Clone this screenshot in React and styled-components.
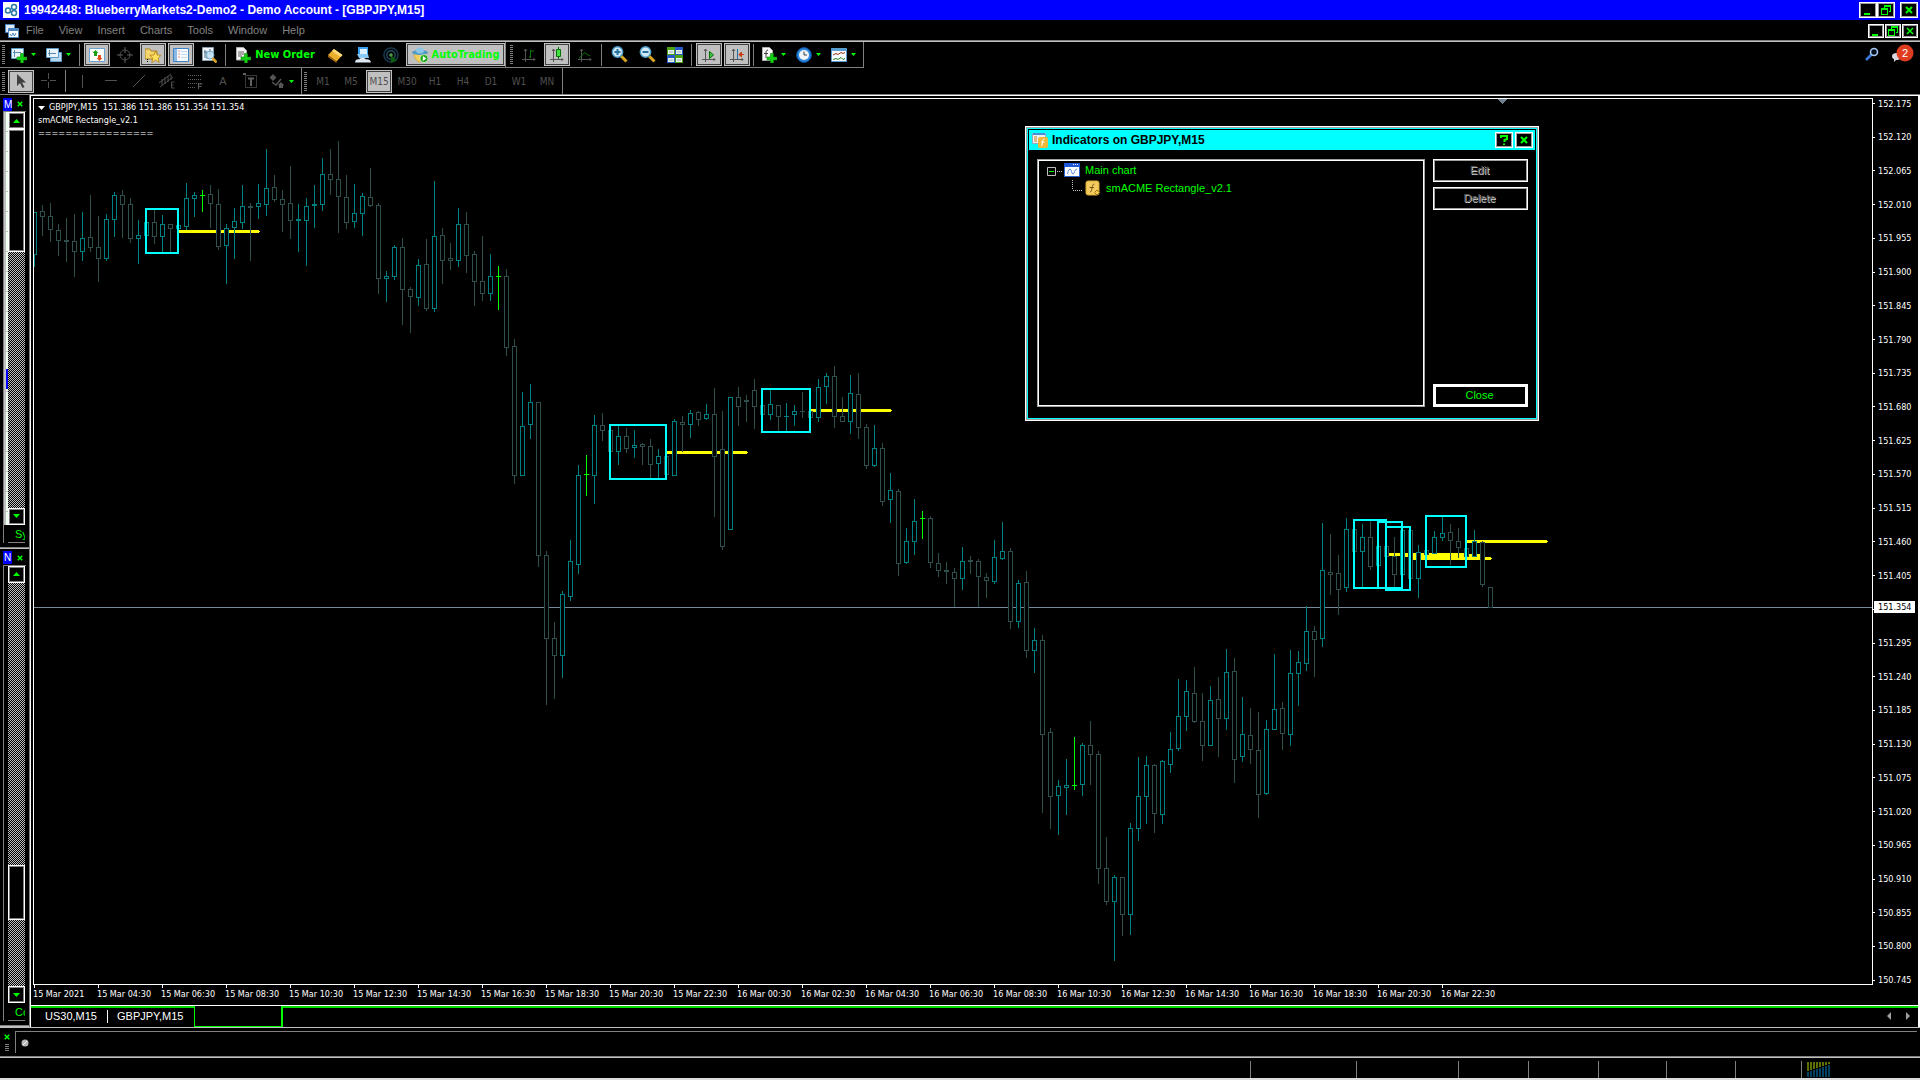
import React from 'react';
import styled, { createGlobalStyle, css } from 'styled-components';

const STEP = 8;
const ORIGIN_Y = 99;

const COLORS = { u: '#008080', d: '#2f4f4f', x: '#00ff00' };

// kind, high, body top, body bottom, low
const candles = [
  ['u', 212, 212, 255, 267], ['d', 205, 211, 217, 236], ['d', 203, 216, 230, 242], ['d', 224, 230, 241, 256],
  ['d', 218, 240, 242, 262], ['d', 214, 241, 252, 277], ['u', 212, 238, 252, 261], ['d', 195, 237, 248, 252],
  ['d', 216, 247, 259, 282], ['u', 214, 219, 259, 261], ['u', 192, 195, 220, 237], ['d', 190, 195, 205, 238],
  ['d', 198, 204, 239, 243], ['u', 220, 235, 239, 264], ['u', 222, 222, 236, 236], ['d', 209, 222, 237, 244],
  ['u', 215, 224, 237, 253], ['d', 224, 224, 229, 253], ['u', 225, 225, 229, 229], ['u', 183, 198, 227, 230],
  ['u', 192, 195, 199, 217], ['x', 190, 195, 196, 212], ['d', 185, 194, 204, 228], ['d', 189, 204, 247, 250],
  ['u', 224, 228, 246, 284], ['u', 208, 221, 228, 259], ['u', 185, 206, 223, 229], ['d', 203, 206, 208, 261],
  ['u', 184, 203, 207, 219], ['u', 149, 188, 205, 216], ['d', 175, 187, 200, 202], ['d', 190, 199, 205, 232],
  ['d', 166, 203, 221, 239], ['u', 204, 219, 221, 252], ['u', 198, 206, 221, 266], ['u', 185, 204, 206, 228],
  ['u', 158, 174, 205, 211], ['d', 149, 174, 180, 195], ['d', 141, 179, 197, 233], ['d', 175, 197, 223, 229],
  ['u', 184, 213, 222, 228], ['u', 193, 196, 214, 236], ['d', 168, 197, 206, 207], ['d', 203, 205, 279, 294],
  ['u', 271, 276, 279, 302], ['u', 245, 247, 277, 280], ['d', 238, 247, 290, 325], ['d', 287, 289, 297, 333],
  ['u', 259, 265, 298, 306], ['d', 239, 264, 309, 311], ['u', 181, 236, 309, 312], ['d', 228, 235, 261, 284],
  ['d', 243, 258, 261, 270], ['u', 208, 224, 261, 267], ['d', 212, 224, 256, 273], ['d', 251, 254, 282, 306],
  ['d', 236, 281, 294, 301], ['u', 254, 276, 294, 301], ['x', 266, 276, 277, 310], ['d', 269, 276, 348, 356],
  ['d', 339, 346, 476, 484], ['u', 392, 426, 476, 476], ['u', 384, 402, 425, 439], ['d', 402, 402, 556, 567],
  ['d', 551, 555, 639, 705], ['d', 622, 638, 656, 699], ['u', 591, 594, 656, 678], ['u', 540, 561, 597, 601],
  ['u', 465, 475, 565, 574], ['x', 455, 474, 475, 496], ['u', 415, 425, 476, 504], ['d', 413, 425, 431, 441],
  ['d', 430, 430, 452, 452], ['u', 426, 436, 452, 465], ['d', 428, 436, 449, 453], ['u', 430, 445, 448, 458],
  ['d', 443, 444, 447, 465], ['d', 439, 446, 465, 478], ['u', 449, 456, 464, 478], ['d', 456, 456, 475, 475],
  ['u', 419, 421, 476, 476], ['d', 416, 422, 425, 452], ['u', 410, 413, 425, 438], ['d', 411, 412, 420, 426],
  ['u', 404, 414, 419, 420], ['d', 388, 414, 457, 517], ['d', 411, 449, 547, 550], ['u', 397, 397, 530, 530],
  ['d', 387, 397, 407, 426], ['d', 395, 400, 402, 422], ['d', 379, 390, 407, 429], ['d', 405, 405, 415, 415],
  ['u', 389, 404, 415, 420], ['d', 405, 405, 417, 432], ['u', 403, 416, 417, 432], ['u', 405, 411, 415, 426],
  ['d', 392, 411, 412, 418], ['d', 411, 411, 418, 418], ['u', 379, 387, 418, 422], ['u', 373, 376, 387, 404],
  ['d', 366, 376, 417, 428], ['d', 397, 416, 422, 422], ['u', 375, 393, 422, 434], ['d', 373, 394, 428, 439],
  ['d', 424, 427, 466, 469], ['u', 425, 448, 466, 467], ['d', 443, 448, 502, 506], ['u', 473, 490, 500, 523],
  ['d', 489, 491, 564, 576], ['u', 528, 541, 563, 564], ['u', 499, 521, 542, 555], ['x', 511, 518, 519, 539],
  ['d', 516, 518, 563, 568], ['d', 553, 563, 571, 577], ['d', 562, 570, 572, 584], ['d', 568, 572, 579, 607],
  ['u', 547, 561, 579, 590], ['d', 556, 560, 562, 574], ['d', 559, 561, 577, 607], ['d', 573, 577, 581, 598],
  ['u', 540, 557, 582, 584], ['u', 522, 551, 559, 560], ['d', 548, 551, 622, 629], ['u', 580, 583, 622, 628],
  ['d', 571, 582, 651, 658], ['u', 628, 640, 651, 673], ['d', 635, 640, 735, 813], ['d', 728, 732, 797, 829],
  ['u', 780, 786, 796, 835], ['u', 759, 785, 788, 815], ['x', 737, 785, 786, 790], ['u', 743, 745, 785, 796],
  ['d', 721, 745, 755, 785], ['d', 751, 754, 869, 884], ['d', 837, 868, 902, 905], ['u', 875, 877, 902, 961],
  ['d', 877, 877, 915, 936], ['u', 823, 828, 915, 935], ['u', 757, 796, 829, 841], ['u', 756, 765, 797, 824],
  ['d', 764, 765, 814, 833], ['u', 760, 761, 815, 824], ['u', 732, 749, 765, 773], ['u', 679, 716, 749, 751],
  ['u', 680, 691, 717, 731], ['d', 667, 693, 722, 723], ['d', 693, 721, 746, 761], ['u', 686, 700, 746, 746],
  ['d', 677, 699, 719, 757], ['u', 649, 672, 719, 730], ['d', 658, 671, 760, 783], ['u', 697, 734, 757, 762],
  ['d', 708, 735, 750, 764], ['d', 712, 750, 795, 818], ['u', 720, 729, 794, 795], ['u', 654, 709, 730, 730],
  ['d', 702, 708, 734, 750], ['u', 650, 673, 735, 746], ['u', 651, 662, 674, 706], ['u', 606, 631, 664, 671],
  ['d', 626, 631, 640, 677], ['u', 523, 570, 639, 647], ['d', 534, 572, 575, 595], ['d', 555, 573, 590, 615],
  ['u', 518, 529, 588, 592], ['d', 529, 529, 552, 552], ['u', 524, 537, 552, 588], ['d', 520, 537, 567, 570],
  ['u', 546, 546, 566, 566], ['d', 546, 546, 557, 557], ['d', 537, 556, 575, 588], ['u', 530, 530, 575, 575],
  ['d', 530, 530, 579, 579], ['u', 545, 552, 579, 598], ['d', 550, 550, 555, 555], ['u', 531, 537, 554, 554],
  ['u', 516, 533, 538, 541], ['d', 524, 532, 541, 565], ['d', 528, 541, 548, 558], ['d', 548, 548, 557, 557],
  ['u', 530, 541, 557, 557], ['d', 541, 542, 585, 587], ['d', 587, 587, 608, 608],
];

// x, y, width, height of the consolidation boxes
const zones = [
  [111, 208, 34, 46],
  [575, 424, 58, 56],
  [727, 388, 50, 45],
  [1319, 519, 34, 70],
  [1343, 521, 26, 68],
  [1351, 526, 26, 65],
  [1391, 515, 42, 53],
];

const levels = [[145, 230], [633, 451], [777, 409], [1353, 553], [1369, 554], [1377, 557], [1433, 540]];

const prices = Array.from({ length: 27 }, (_, i) => (152.175 - i * 0.055).toFixed(3));
// this label sits behind the current price
prices[15] = '';

const times = ['15 Mar 2021'];
for (let h = 4; h < 24; h += 2) times.push(`15 Mar ${String(h).padStart(2, '0')}:30`);
for (let h = 0; h < 24; h += 2) times.push(`16 Mar ${String(h).padStart(2, '0')}:30`);

const GlobalStyle = createGlobalStyle`
  * {
    box-sizing: border-box;
  }

  html, body, #root {
    height: 100%;
    margin: 0;
  }

  body {
    background: #000;
    overflow: hidden;
    font-family: 'Liberation Sans', Arial, sans-serif;
    font-size: 11px;
  }

  button {
    font: inherit;
    color: inherit;
    background: none;
    border: 0;
    padding: 0;
  }

  svg {
    display: block;
    flex: none;
  }
`;

const small = css`
  font-family: 'DejaVu Sans Condensed', 'DejaVu Sans', sans-serif;
  font-size: 9px;
`;

const Page = styled.div`
  display: flex;
  flex-direction: column;
  height: 100vh;
  color: #fff;
  border-bottom: 2px solid #dcdcdc;
`;

const TitleBar = styled.header`
  display: flex;
  align-items: center;
  height: 20px;
  padding: 0 2px 0 3px;
  gap: 5px;
  background: #0000ff;
`;

const Title = styled.h1`
  flex: 1;
  margin: 0;
  font-size: 12px;
  font-weight: bold;
`;

const Caption = styled.div`
  display: flex;
  gap: ${(p) => p.$gap || 0}px;
`;

const CaptionButton = styled.button`
  display: flex;
  align-items: center;
  justify-content: center;
  width: ${(p) => p.$w || 18}px;
  height: ${(p) => p.$h || 16}px;
  background: #000;
  border: 1px solid #fff;
  box-shadow: inset 0 0 0 1px #a0a0a0;
`;

const MenuBar = styled.nav`
  display: flex;
  align-items: center;
  height: 22px;
  padding: 0 2px 0 5px;
  border-bottom: 1px solid #c0c0c0;
  box-shadow: inset 0 -1px #808080;
`;

const Menu = styled.ul`
  display: flex;
  flex: 1;
  list-style: none;
  margin: 0;
  padding: 0 0 2px 7px;
  gap: 15px;
  color: #808080;
`;

const Tools = styled.div`
  display: flex;
  justify-content: space-between;
  height: 26px;
`;

const ToolBar = styled.div`
  display: flex;
  align-items: center;
  height: 26px;
  padding-left: ${(p) => p.$lead || 2}px;
  border-right: 1px solid #808080;
  border-bottom: ${(p) => (p.$last ? 0 : 1)}px solid #808080;
`;

const ToolRow = styled.div`
  display: flex;
  height: 26px;
`;

const Grip = styled.i`
  width: 3px;
  height: 19px;
  margin-right: 3px;
  background: repeating-linear-gradient(#808080 0 1px, #000 1px 2px);
`;

const Separator = styled.i`
  width: 1px;
  height: 22px;
  margin: 0 4px 0 1px;
  background: #808080;
`;

const Tool = styled.button`
  display: flex;
  align-items: center;
  justify-content: center;
  gap: ${(p) => p.$gap || 4}px;
  width: ${(p) => p.$w || 26}px;
  height: 23px;
  margin-right: ${(p) => (p.$flush ? 0 : 2)}px;
  color: ${(p) => p.$color || '#505050'};
  ${(p) =>
    p.$on &&
    css`
      background: #c0c0c0;
      border: 1px solid #c0c0c0;
      box-shadow: inset 0 0 0 1px #404040;
    `}
`;

const MenuTool = styled(Tool)`
  justify-content: flex-start;
  width: 33px;
  padding-left: 3px;
`;

const Period = styled(Tool)`
  font-family: 'DejaVu Sans Condensed', 'DejaVu Sans', sans-serif;
  font-size: 10px;
`;

const BoldLabel = styled.span`
  font-family: 'DejaVu Sans Condensed', 'DejaVu Sans', sans-serif;
  font-weight: bold;
  font-size: 11px;
  color: #00ff00;
  white-space: nowrap;
`;

const Status = styled.div`
  display: flex;
  align-items: center;
  gap: 12px;
  padding: 0 6px 2px 0;
`;

const Workspace = styled.div`
  display: flex;
  flex: 1;
  min-height: 0;
  border-top: 1px solid #808080;
`;

const Sidebar = styled.aside`
  display: flex;
  flex-direction: column;
  width: 30px;
  border-right: 1px solid #808080;
`;

const Panel = styled.section`
  display: flex;
  flex-direction: column;
  flex: ${(p) => p.$grow} 0 0;
  min-height: 0;
  padding: 2px 3px 5px 3px;
  border-bottom: 1px solid #c0c0c0;
  box-shadow: inset 0 -1px #808080;
`;

const PanelHead = styled.div`
  display: flex;
  align-items: center;
  gap: 5px;
  height: 14px;
`;

const PanelName = styled.h2`
  width: 9px;
  height: 13px;
  margin: 0;
  padding-left: 1px;
  overflow: hidden;
  background: #0000ff;
  font-size: 10px;
  line-height: 13px;
  font-weight: normal;
`;

const PanelBody = styled.div`
  display: flex;
  flex: 1;
  min-height: 0;
  border-top: 1px solid #808080;
  border-left: 1px solid #808080;
`;

const ListEdge = styled.div`
  width: 4px;
  background: ${(p) =>
    p.$filled
      ? 'repeating-linear-gradient(#f0fff0 0 19px, #c0c0c0 19px 20px) 2px 0 / 2px 100% no-repeat, #c0c0c0'
      : '#000'};
  margin-bottom: 18px;
  padding: 257px 0 0 2px;
`;

const Selected = styled.i`
  display: block;
  height: 20px;
  background: #0000ff;
`;

const ScrollColumn = styled.div`
  display: flex;
  flex-direction: column;
  width: 17px;
`;

const ScrollButton = styled.button`
  display: flex;
  align-items: center;
  justify-content: center;
  height: 17px;
  border: 1px solid #fff;
  box-shadow: inset 0 0 0 1px #808080;
`;

const Track = styled.div`
  display: flex;
  flex-direction: column;
  flex: 1;
  background: repeating-conic-gradient(#c0c0c0 0 25%, #000 0 50%) 0 0 / 2px 2px;
`;

const Space = styled.i`
  flex: ${(p) => p.$grow} 0 0;
`;

const Thumb = styled.i`
  flex: ${(p) => p.$grow} 0 0;
  background: #000;
  border: 1px solid #fff;
  box-shadow: inset 0 0 0 1px #808080;
`;

const PanelTab = styled.div`
  height: 18px;
  padding-left: 7px;
  overflow: hidden;
  color: #00ff00;
  line-height: 18px;
  border-bottom: 1px solid #808080;
`;

const Mdi = styled.main`
  display: flex;
  flex-direction: column;
  flex: 1;
  min-width: 0;
  border: solid #fff;
  border-width: 1px 2px 0 1px;
`;

const Chart = styled.div`
  display: grid;
  grid-template-columns: 1fr 45px;
  grid-template-rows: 1fr 20px;
  flex: 1;
  min-height: 0;
  padding: 2px 0 0 2px;
`;

const Plot = styled.div`
  position: relative;
  min-height: 0;
  overflow: hidden;
  border: 1px solid #fff;
`;

const ChartInfo = styled.div`
  ${small}
  position: absolute;
  top: 2px;
  left: 4px;
  line-height: 13px;
  white-space: pre;
`;

const InfoHead = styled.div`
  display: flex;
  align-items: center;
  gap: 4px;
`;

const PriceAxis = styled.div`
  ${small}
  position: relative;
  display: flex;
  flex-direction: column;
  justify-content: space-between;
  margin-bottom: -1px;
`;

const Price = styled.span`
  display: flex;
  align-items: center;
  gap: 3px;
  height: 11px;
  &::before {
    content: '';
    width: 2px;
    height: 1px;
    background: #fff;
  }
`;

const CurrentPrice = styled.span`
  position: absolute;
  top: 503px;
  left: 1px;
  width: 41px;
  padding-left: 4px;
  line-height: 12px;
  color: #000;
  background: #fff;
`;

const TimeAxis = styled.div`
  ${small}
  grid-column: 1 / 3;
  display: flex;
  overflow: hidden;
`;

const Time = styled.span`
  flex: none;
  width: 64px;
  height: 20px;
  line-height: 19px;
  white-space: nowrap;
  background: linear-gradient(#fff, #fff) 1px 0 / 1px 3px no-repeat;
`;

const Tabs = styled.div`
  display: flex;
  height: 22px;
  border-top: 1px solid #fff;
`;

const Tab = styled.button`
  display: flex;
  align-items: center;
  padding: 0 ${(p) => p.$right}px 3px ${(p) => p.$left}px;
  border-top: 2px solid #00dc00;
`;

const TabDivider = styled.i`
  width: 1px;
  border-top: 2px solid #00dc00;
  background: linear-gradient(#fff, #fff) 0 2px / 1px 13px no-repeat;
`;

const ActiveTab = styled.div`
  width: 89px;
  border: solid #00ff00;
  border-width: 0 2px 1px 1px;
`;

const TabRest = styled.div`
  display: flex;
  flex: 1;
  align-items: center;
  justify-content: flex-end;
  gap: 15px;
  padding: 0 8px 3px 0;
  border-top: 2px solid #00dc00;
`;

const Terminal = styled.div`
  display: flex;
  height: 31px;
  padding: 3px 3px 2px 3px;
  border: solid #c0c0c0;
  border-width: 1px 0;
  box-shadow: inset 0 -1px #808080;
`;

const TerminalSide = styled.div`
  display: flex;
  flex-direction: column;
  align-items: center;
  gap: 4px;
  width: 12px;
  padding: 3px 4px 0 0;
`;

const TerminalGrip = styled.i`
  width: 4px;
  height: 7px;
  background: repeating-linear-gradient(#808080 0 1px, #000 1px 2px);
`;

const TerminalBody = styled.div`
  flex: 1;
  padding: 7px 5px;
  border: solid #808080;
  border-width: 1px 0 0 1px;
  margin-bottom: 2px;
`;

const StatusBar = styled.footer`
  display: flex;
  justify-content: flex-end;
  height: 20px;
  padding-top: 3px;
`;

const StatusCell = styled.div`
  width: ${(p) => p.$w}px;
  padding: 1px 0 0 5px;
  border-left: 1px solid #808080;
`;

const Dialog = styled.section`
  position: absolute;
  top: 126px;
  left: 1025px;
  display: flex;
  flex-direction: column;
  width: 514px;
  height: 295px;
  padding: 1px;
  background: #000;
  border: 1px solid #fff;
  box-shadow: inset 0 0 0 1px #a0a0a0, inset 0 0 0 2px #00ffff;
`;

const DialogHead = styled.div`
  display: flex;
  align-items: center;
  gap: 4px;
  height: 20px;
  margin: 2px 2px 0;
  padding: 0 2px 0 3px;
  background: #00ffff;
  color: #000;
`;

const DialogBody = styled.div`
  display: flex;
  flex: 1;
  gap: 8px;
  padding: 9px 9px 12px 10px;
`;

const Tree = styled.ul`
  flex: 1;
  margin: 0;
  padding: 1px 0 0 9px;
  list-style: none;
  color: #00ff00;
  border: 1px solid #a0a0a0;
  box-shadow: inset 0 0 0 1px #fff;
`;

const TreeItem = styled.li`
  display: flex;
  align-items: center;
  gap: ${(p) => p.$gap}px;
  height: 18px;
  padding-left: ${(p) => p.$indent || 0}px;
`;

const DialogActions = styled.div`
  display: flex;
  flex-direction: column;
  gap: 5px;
  width: 95px;
`;

const DialogButton = styled.button`
  height: 23px;
  padding: 0 2px 2px 0;
  border: 1px solid #fff;
  box-shadow: inset 0 0 0 ${(p) => (p.$default ? 2 : 1)}px ${(p) => (p.$default ? '#fff' : '#a0a0a0')};
  color: ${(p) => (p.disabled ? '#606060' : '#00ff00')};
  text-shadow: ${(p) => (p.disabled ? '1px 1px #d0d0d0' : 'none')};
  margin-top: ${(p) => (p.$default ? 'auto' : 0)};
`;

const Icon = ({ w = 16, h = 16, children, ...rest }) => (
  <svg width={w} height={h} viewBox={`0 0 ${w} ${h}`} fill="none" aria-hidden="true" {...rest}>
    {children}
  </svg>
);

const Arrow = () => (
  <Icon w={5} h={3}>
    <path d="M0 0h5L2.5 3z" fill="#00ff00" />
  </Icon>
);

const Cross = ({ size = 8, width = 2 }) => (
  <Icon w={size} h={size} viewBox="0 0 8 8">
    <path d="M1 1l6 6M7 1l-6 6" stroke="#00ff00" strokeWidth={width} />
  </Icon>
);

const Minimize = () => (
  <Icon w={10} h={10}>
    <path d="M1 8h6v2H1z" fill="#00ff00" />
  </Icon>
);

const Restore = () => (
  <Icon w={10} h={10} shapeRendering="crispEdges">
    <path d="M3 0h7v7H8V6h1V2H4v1H3z" fill="#00ff00" />
    <path d="M0 3h7v7H0zM1 5v4h5V5z" fill="#00ff00" fillRule="evenodd" />
  </Icon>
);

const Plus = () => (
  <path d="M9.500 6.500h3v3.500h3.500v3h-3.500v3h-3v-3H6v-3h3.500z" fill="#14d214" stroke="#078007" strokeWidth=".6" />
);

const Axes = ({ color = '#555' }) => (
  <path d="M4.500 2v13M1 12.500h13M3 4l1.500-2L6 4M12.500 11l1.500 1.500-1.500 1.500" stroke={color} />
);

const Magnifier = ({ minus }) => (
  <Icon w={17} h={17}>
    <path d="M10 10l5.500 5.500" stroke="#d9a520" strokeWidth="3" />
    <circle cx="6.500" cy="6" r="5.200" fill="#cfeaf8" stroke="#4f9cc8" strokeWidth="1.400" />
    <path d={minus ? 'M3.500 6h6' : 'M3.500 6h6M6.500 3v6'} stroke="#2b6f9c" strokeWidth="2" />
  </Icon>
);

const ICONS = {
  newChart: (
    <>
      <path d="M.5 1.500h12v10H.5z" fill="#e8f3fb" stroke="#5a9bc8" />
      <path d="M3.500 3v7M2 5.500h8" stroke="#5a88a8" />
      <Plus />
    </>
  ),
  profiles: (
    <>
      <path d="M4.500 5.500h11v9h-11z" fill="#b9d8ee" stroke="#5a9bc8" />
      <path d="M.5 1.500h12v9H.5z" fill="#e8f3fb" stroke="#5a9bc8" />
      <path d="M3.500 3v6M2 6.500h8" stroke="#5a88a8" />
    </>
  ),
  market: (
    <>
      <path d="M.5 1.500h15v13H.5z" fill="#fff" stroke="#6aa3d0" />
      <path d="M6.500 3l3 3H8v3H5V6H3.500z" fill="#18a018" />
      <path d="M10.500 14L7.500 11H9V8h3v3h1.500z" fill="#e0501c" />
    </>
  ),
  cross: (
    <>
      <circle cx="8" cy="8" r="5" stroke="#505050" />
      <path d="M8 0v6M8 10v6M0 8h6M10 8h6" stroke="#606060" />
    </>
  ),
  favorites: (
    <>
      <path d="M0 2h5l1 2h6v8H0z" fill="#f4d46c" stroke="#a8821c" />
      <path d="M2.500 12v4" stroke="#000" strokeDasharray="1 1" />
      <path d="M10.500 4l1.700 4 4 .3-3 2.700 1 4.500-3.700-2.400-3.700 2.400 1-4.500-3-2.700 4-.3z" fill="#ffe060" stroke="#b07c10" strokeWidth=".8" />
    </>
  ),
  terminal: (
    <>
      <path d="M.5 1.500h15v13H.5z" fill="#f6fafe" stroke="#3d83c4" />
      <path d="M1 2h3v12H1z" fill="#8cb8e4" />
      <path d="M5.500 4h1M5.500 7h1M5.500 10h1" stroke="#d04020" />
      <path d="M8 4.500h6M8 7.500h6M8 10.500h6" stroke="#c8dcf0" />
    </>
  ),
  tester: (
    <>
      <path d="M1.500.5h11v13h-11z" fill="#f2f6fa" stroke="#8aa0b0" />
      <path d="M4 3v8M6 5v7M3 5h3M9 2v6" stroke="#4a6a80" />
      <circle cx="9" cy="8" r="4" fill="#bfe0f2" fillOpacity=".8" stroke="#6fa6c8" />
      <path d="M11.500 11l4 4.500" stroke="#d9a520" strokeWidth="2.600" />
    </>
  ),
  order: (
    <>
      <path d="M1.500.5h7l3 3v9.500h-10z" fill="#f4f4f4" stroke="#b0b0b0" />
      <path d="M3 5h6M3 7h6M3 9h4" stroke="#606060" />
      <Plus />
    </>
  ),
  book: (
    <>
      <path d="M1 8l6-6 8.500 6-6 6.500z" fill="#e8ae2c" />
      <path d="M7 2l8.500 6-2 2L5 4z" fill="#ffd978" />
      <path d="M1 8l8.500 6.500v1.500L1 10z" fill="#a86c10" />
    </>
  ),
  guide: (
    <>
      <path d="M3 0h10v8H3z" fill="#3aa0f0" />
      <path d="M5 2h7v5H5z" fill="#dff1ff" />
      <path d="M2 7h11l1 4H4z" fill="#8cc8f4" />
      <path d="M0 15.500c0-3 3-4 4-3 1-2.500 6-2.500 7 0 2-1 5 1 5 3z" fill="#dde8f2" />
    </>
  ),
  signal: (
    <>
      <circle cx="8" cy="8" r="7" stroke="#16384e" strokeWidth="1.600" />
      <circle cx="8" cy="8" r="4.200" stroke="#1f5068" strokeWidth="1.400" />
      <path d="M8 8v8l6-2.500z" fill="#0b5c0b" />
      <circle cx="8" cy="8" r="1.800" fill="#4c9c4c" />
    </>
  ),
  auto: (
    <>
      <path d="M2 6c0 5 3 9 6 9s6-4 6-9z" fill="#f2cf58" stroke="#c89a20" strokeWidth=".6" />
      <ellipse cx="8" cy="5.500" rx="8" ry="2.500" fill="#4f9cc8" />
      <ellipse cx="8" cy="3.500" rx="4" ry="3" fill="#8cc6e4" />
      <circle cx="12" cy="11.500" r="4" fill="#18a818" stroke="#fff" strokeWidth=".6" />
      <path d="M10.800 9l3.500 2.500-3.500 2.500z" fill="#fff" />
    </>
  ),
  bars: (
    <>
      <Axes />
      <path d="M9.500 3v8M8 10h2M10 4h3" stroke="#0a7a0a" />
    </>
  ),
  candle: (
    <>
      <Axes />
      <path d="M9.500 0v12" stroke="#087008" />
      <path d="M7.500 2.500h4v7h-4z" fill="#40e040" stroke="#087008" />
    </>
  ),
  line: (
    <>
      <Axes />
      <path d="M2 11c3-1 4-6 6-5s3 2 5 3" stroke="#0a7a0a" />
    </>
  ),
  tile: (
    <>
      <path d="M0 0h8v8H0zM8 8h8v8H8z" fill="#4ea014" />
      <path d="M8 0h8v8H8zM0 8h8v8H0z" fill="#2858c8" />
      <path d="M1 3h6v4H1zM9 3h6v4H9zM1 11h6v4H1zM9 11h6v4H9z" fill="#e8f2e8" />
      <path d="M2 5h4M10 5h4M2 13h4M10 13h4" stroke="#90b0c0" />
    </>
  ),
  scroll: (
    <>
      <Axes />
      <path d="M8.500 4.500l4 3.500-4 3.500z" fill="#40c040" stroke="#087008" />
    </>
  ),
  shift: (
    <>
      <Axes />
      <path d="M8.500 2v10" stroke="#2070a8" />
      <path d="M10 7.500h5M12.500 5L10 7.500l2.500 2.500z" stroke="#c83c10" fill="#c83c10" />
    </>
  ),
  indicators: (
    <>
      <path d="M1.500.5h7l3 3v10h-10z" fill="#f8f8f8" stroke="#b0b0b0" />
      <path d="M7 3c-2 0-2 2-2 3v5M3 6.500h4" stroke="#404040" />
      <Plus />
    </>
  ),
  clock: (
    <>
      <circle cx="8" cy="8" r="7.400" fill="#2a86dc" stroke="#0c4c98" />
      <circle cx="8" cy="8" r="5" fill="#eef4f8" />
      <path d="M8 4.500V8h3" stroke="#404040" />
    </>
  ),
  template: (
    <>
      <path d="M.5 1.500h15v13H.5z" fill="#f6fafc" stroke="#5a9bd0" />
      <path d="M1 2h14v2H1z" fill="#5a9bd0" />
      <path d="M2 8l3-1.500 2 1 3-2 2 1 2-1" stroke="#a03018" />
      <path d="M2 12.500l3-1 2 1 3-2 2 2 2-1" stroke="#208020" />
    </>
  ),
  cursor: <path d="M4 1v12l3-3 2.500 5 2-1L9 9.500h4z" fill="#404040" />,
  crosshair: <path d="M7.500 0v6M7.500 9v6M0 7.500h6M9 7.500h6" stroke="#505050" />,
  vline: <path d="M7.500 2v13" stroke="#505050" />,
  hline: <path d="M2 7.500h12" stroke="#505050" />,
  trend: <path d="M2 14L14 2" stroke="#505050" />,
  channel: (
    <path d="M0 10L12 1M1 14L14 4M3 6v6M6 4v7M9 3v6M12 2v5M12.500 9h3M12.500 9v6h3M12.500 12h2" stroke="#505050" />
  ),
  fibo: (
    <>
      <path d="M1 2.500h14M1 6.500h14M1 10.500h14M1 14.500h8" stroke="#606060" strokeDasharray="1 1" />
      <path d="M11.500 16v-5h4M11.500 13.500h3" stroke="#606060" />
    </>
  ),
  textLabel: (
    <>
      <path d="M2.500 2.500h11v12h-11z" stroke="#707070" strokeDasharray="1 1" />
      <path d="M5 5.500h6M8 6v7" stroke="#606060" strokeWidth="2" />
      <path d="M0 0h3v2H0z" fill="#606060" />
    </>
  ),
  arrows: (
    <>
      <path d="M4 1l3.500 3.500L4 8 .5 4.500zM12 9l3.500 3.500H14V15h-4v-2.500H8.500z" fill="#555" />
      <path d="M3 9l4 3 5-6" stroke="#555" strokeWidth="1.500" />
    </>
  ),
};

const ToolIcon = ({ name, label, ...rest }) => (
  <Tool aria-label={label || name} {...rest}>
    <Icon>{ICONS[name]}</Icon>
  </Tool>
);

const ToolMenu = ({ name }) => (
  <MenuTool aria-label={name} aria-haspopup="menu">
    <Icon>{ICONS[name]}</Icon>
    <Arrow />
  </MenuTool>
);

function Candle({ index, data }) {
  const [kind, high, top, bottom, low] = data;
  const x = index * STEP;
  const h = bottom - top;
  return (
    <g fill={COLORS[kind]}>
      <rect x={x} y={high - ORIGIN_Y} width="1" height={low - high} />
      <rect x={x - 2} y={top - ORIGIN_Y} width="5" height={h} />
      {h > 2 && <rect x={x - 1} y={top - ORIGIN_Y + 1} width="3" height={h - 2} fill="#000" />}
    </g>
  );
}

function PriceChart() {
  return (
    <svg width="100%" height="100%" shapeRendering="crispEdges" role="img" aria-label="GBPJPY M15 candles">
      <path d="M1463 0h10l-5 5z" fill="#708090" />
      <rect x="0" y="508" width="100%" height="1" fill="#778899" />
      {levels.map(([x, y]) => (
        <path key={x} d={`M${x} ${y - ORIGIN_Y}h80v1h1v1h-1v1h-80z`} fill="#ffff00" />
      ))}
      {candles.map((c, i) => (
        <Candle key={i} index={i} data={c} />
      ))}
      {zones.map(([x, y, w, h]) => (
        <rect
          key={x}
          x={x + 1}
          y={y - ORIGIN_Y + 1}
          width={w - 2}
          height={h - 2}
          fill="none"
          stroke="#00ffff"
          strokeWidth="2"
        />
      ))}
    </svg>
  );
}

function SidePanel({ name, tab, grow, before, thumb, after, filled }) {
  return (
    <Panel $grow={grow}>
      <PanelHead>
        <PanelName>{name}</PanelName>
        <button aria-label="Close panel">
          <Cross size={6} />
        </button>
      </PanelHead>
      <PanelBody>
        <ListEdge $filled={filled}>{filled && <Selected />}</ListEdge>
        <ScrollColumn>
          <ScrollButton aria-label="Scroll up">
            <Icon w={7} h={4}>
              <path d="M0 4h7L3.500 0z" fill="#00ff00" />
            </Icon>
          </ScrollButton>
          <Track>
            <Space $grow={before} />
            <Thumb $grow={thumb} />
            <Space $grow={after} />
          </Track>
          <ScrollButton aria-label="Scroll down">
            <Icon w={7} h={4}>
              <path d="M0 0h7L3.500 4z" fill="#00ff00" />
            </Icon>
          </ScrollButton>
          <PanelTab>{tab}</PanelTab>
        </ScrollColumn>
      </PanelBody>
    </Panel>
  );
}

function IndicatorsDialog() {
  return (
    <Dialog role="dialog" aria-label="Indicators">
      <DialogHead>
        <Icon>
          <path d="M.5 1.500h13v10H.5z" fill="#e8f0f8" stroke="#98a8b8" />
          <path d="M1 1h12v2H1z" fill="#4c8cd0" />
          <path d="M2 5h3M2 7h3M2 9h3" stroke="#d08020" />
          <rect x="6" y="5" width="10" height="11" rx="2" fill="#f0b838" />
          <path d="M12.500 7c-2 0-1.500 2-2 4s-.5 3-1.500 3M9 10h3.500" stroke="#fff" />
        </Icon>
        <Title as="h2">Indicators on GBPJPY,M15</Title>
        <Caption $gap={2}>
          <CaptionButton aria-label="Help">
            <Icon w={8} h={10}>
              <path d="M1 3V1h6v3L4.500 5v2M4 8.500v1.500" stroke="#00ff00" strokeWidth="2" />
            </Icon>
          </CaptionButton>
          <CaptionButton aria-label="Close">
            <Cross />
          </CaptionButton>
        </Caption>
      </DialogHead>
      <DialogBody>
        <Tree>
          <TreeItem $gap={5}>
            <Icon w={33} h={16}>
              <path d="M.5 5.500h8v8h-8z" stroke="#c0c0c0" />
              <path d="M2 9.500h5" stroke="#00ff00" />
              <path d="M10 9.500h6" stroke="#c0c0c0" strokeDasharray="1 1" />
              <path d="M17.500 1.500h15v13h-15z" fill="#fff" stroke="#2c5fd0" />
              <path d="M17 1h16v4H17z" fill="#2058d8" />
              <path d="M26 2.500h5" stroke="#fff" strokeDasharray="1 1" />
              <path d="M20 12c1 0 1-5 3-5s1 5 3 5 1-5 4-5" stroke="#5a8ae0" />
            </Icon>
            Main chart
          </TreeItem>
          <TreeItem $gap={6} $indent={25}>
            <Icon w={28} h={16}>
              <path d="M.5 0v10M1 10.500h10" stroke="#c0c0c0" strokeDasharray="1 1" />
              <rect x="14" y="1" width="13" height="14" rx="2" fill="#f4cc60" stroke="#d8a830" />
              <path d="M22.500 4c-2 0-2 2-2.500 4s-.5 4-2 4M17.500 7.500h4.500" stroke="#7a5410" />
              <path d="M25 10l2.500 2.500L25 15l-2.500-2.500z" fill="#f4cc60" stroke="#a07010" />
            </Icon>
            smACME Rectangle_v2.1
          </TreeItem>
        </Tree>
        <DialogActions>
          <DialogButton disabled>Edit</DialogButton>
          <DialogButton disabled>Delete</DialogButton>
          <DialogButton $default>Close</DialogButton>
        </DialogActions>
      </DialogBody>
    </Dialog>
  );
}

function App() {
  return (
    <Page>
      <GlobalStyle />
      <TitleBar>
        <Icon>
          <path d="M0 0h16v16H0z" fill="#fff" />
          <circle cx="5" cy="8.500" r="2.500" stroke="#2a7aa8" strokeWidth="1.500" />
          <circle cx="11" cy="5" r="2.500" stroke="#2a7aa8" strokeWidth="1.500" />
          <circle cx="11" cy="11" r="2.500" stroke="#2a7aa8" strokeWidth="1.500" />
        </Icon>
        <Title>19942448: BlueberryMarkets2-Demo2 - Demo Account - [GBPJPY,M15]</Title>
        <Caption>
          <CaptionButton aria-label="Minimize">
            <Minimize />
          </CaptionButton>
          <CaptionButton aria-label="Restore">
            <Restore />
          </CaptionButton>
        </Caption>
        <CaptionButton aria-label="Close">
          <Cross />
        </CaptionButton>
      </TitleBar>

      <MenuBar>
        <Icon w={14} h={14}>
          <path d="M.5.500h9v8h-9z" fill="#dfeaf6" stroke="#4a84c0" />
          <path d="M3.500 4.500h10v9h-10z" fill="#fff" stroke="#4a84c0" />
          <path d="M4 5h9v2H4z" fill="#4a84c0" />
          <path d="M5 10l1.500 2L8 9l1.500 3L11 9" stroke="#4a84c0" />
        </Icon>
        <Menu>
          {['File', 'View', 'Insert', 'Charts', 'Tools', 'Window', 'Help'].map((m) => (
            <li key={m}>{m}</li>
          ))}
        </Menu>
        <Caption $gap={1}>
          <CaptionButton aria-label="Minimize chart" $w={16} $h={14}>
            <Minimize />
          </CaptionButton>
          <CaptionButton aria-label="Restore chart" $w={16} $h={14}>
            <Restore />
          </CaptionButton>
          <CaptionButton aria-label="Close chart" $w={16} $h={14}>
            <Cross width={1.5} />
          </CaptionButton>
        </Caption>
      </MenuBar>

      <Tools>
        <ToolRow>
          <ToolBar>
            <Grip />
            <ToolMenu name="newChart" />
            <ToolMenu name="profiles" />
            <Separator />
            <ToolIcon name="market" $on />
            <ToolIcon name="cross" />
            <ToolIcon name="favorites" $on />
            <ToolIcon name="terminal" $on />
            <ToolIcon name="tester" />
            <Separator />
            <Tool $w={90}>
              <Icon>{ICONS.order}</Icon>
              <BoldLabel>New Order</BoldLabel>
            </Tool>
            <ToolIcon name="book" />
            <ToolIcon name="guide" />
            <ToolIcon name="signal" />
            <Tool $w={99} $on $flush>
              <Icon>{ICONS.auto}</Icon>
              <BoldLabel>AutoTrading</BoldLabel>
            </Tool>
          </ToolBar>
          <ToolBar $lead={4}>
            <Grip />
            <ToolIcon name="bars" />
            <ToolIcon name="candle" $on />
            <ToolIcon name="line" />
            <Separator />
            <Tool aria-label="Zoom in">
              <Magnifier />
            </Tool>
            <Tool aria-label="Zoom out">
              <Magnifier minus />
            </Tool>
            <ToolIcon name="tile" />
            <Separator />
            <ToolIcon name="scroll" $on />
            <ToolIcon name="shift" $on />
            <Separator />
            <ToolMenu name="indicators" />
            <ToolMenu name="clock" />
            <ToolMenu name="template" />
          </ToolBar>
        </ToolRow>
        <Status>
          <Icon w={14} h={14}>
            <path d="M1 13l6-6" stroke="#3c78d8" strokeWidth="2.600" />
            <circle cx="9" cy="5" r="3.500" fill="#081020" stroke="#a8c8f4" strokeWidth="1.600" />
          </Icon>
          <Icon w={23} h={20}>
            <path d="M1 12c0-4 9-4 9 0s-3 4-5 4l-2 2v-3c-1 0-2-1-2-3z" fill="#d8d8e0" />
            <circle cx="14" cy="9" r="8.500" fill="#e03c20" />
            <text x="11" y="13" fill="#fff" fontSize="11">2</text>
          </Icon>
        </Status>
      </Tools>

      <ToolRow>
        <ToolBar $last>
          <Grip />
          <ToolIcon name="cursor" $on />
          <ToolIcon name="crosshair" />
          <Separator />
          <ToolIcon name="vline" />
          <ToolIcon name="hline" />
          <ToolIcon name="trend" />
          <ToolIcon name="channel" />
          <ToolIcon name="fibo" />
          <Tool>A</Tool>
          <ToolIcon name="textLabel" />
          <ToolMenu name="arrows" />
        </ToolBar>
        <ToolBar $last>
          <Grip />
          {['M1', 'M5', 'M15', 'M30', 'H1', 'H4', 'D1', 'W1', 'MN'].map((p) => (
            <Period key={p} $on={p === 'M15'}>
              {p}
            </Period>
          ))}
        </ToolBar>
      </ToolRow>

      <Workspace>
        <Sidebar>
          <SidePanel name="M" tab="Sy" grow={454} before={0} thumb={122} after={257} filled />
          <SidePanel name="N" tab="Co" grow={479} before={284} thumb={54} after={66} />
        </Sidebar>
        <Mdi>
          <Chart>
            <Plot>
              <PriceChart />
              <ChartInfo>
                <InfoHead>
                  <Icon w={7} h={4}>
                    <path d="M0 0h7L3.500 4z" fill="#fff" />
                  </Icon>
                  {'GBPJPY,M15  151.386 151.386 151.354 151.354'}
                </InfoHead>
                <div>smACME Rectangle_v2.1</div>
                <div>=================</div>
              </ChartInfo>
            </Plot>
            <PriceAxis>
              {prices.map((p, i) => (
                <Price key={i}>{p}</Price>
              ))}
              <CurrentPrice>151.354</CurrentPrice>
            </PriceAxis>
            <TimeAxis>
              {times.map((t) => (
                <Time key={t}>{t}</Time>
              ))}
            </TimeAxis>
          </Chart>
          <Tabs>
            <Tab $left={14} $right={10}>US30,M15</Tab>
            <TabDivider />
            <Tab $left={9} $right={11}>GBPJPY,M15</Tab>
            <ActiveTab />
            <TabRest>
              <Icon w={4} h={8}>
                <path d="M4 0v8L0 4z" fill="#a0a0a0" />
              </Icon>
              <Icon w={4} h={8}>
                <path d="M0 0v8l4-4z" fill="#a0a0a0" />
              </Icon>
            </TabRest>
          </Tabs>
        </Mdi>
      </Workspace>

      <Terminal>
        <TerminalSide>
          <Cross size={6} />
          <TerminalGrip />
        </TerminalSide>
        <TerminalBody>
          <Icon w={8} h={8}>
            <circle cx="4" cy="4" r="3.500" fill="#b8b8b8" />
            <path d="M2 6l4-4" stroke="#f0f0f0" />
          </Icon>
        </TerminalBody>
      </Terminal>

      <StatusBar>
        {[106, 102, 70, 70, 68, 69, 66].map((w, i) => (
          <StatusCell key={i} $w={w} />
        ))}
        <StatusCell $w={119}>
          <Icon w={24} h={15} shapeRendering="crispEdges">
            {[0, 1, 2, 3, 4, 5, 6, 7].map((i) => (
              <g key={i}>
                <rect x={i * 3} y="0" width="2" height={9 - i} fill="#5c7000" />
                <rect x={i * 3} y={10 - i} width="2" height={5 + i} fill="#004060" />
              </g>
            ))}
          </Icon>
        </StatusCell>
      </StatusBar>

      <IndicatorsDialog />
    </Page>
  );
}

export default App;
